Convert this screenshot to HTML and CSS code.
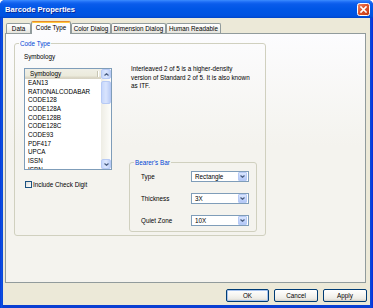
FILE: index.html
```html
<!DOCTYPE html>
<html>
<head>
<meta charset="utf-8">
<link rel="stylesheet" href="styles.css">
</head>
<body>
<div class="window">
  <div class="titlebar">
    <span class="title">Barcode Properties</span>
    <span class="close">
      <svg width="13" height="13" viewBox="0 0 13 13">
        <defs>
          <linearGradient id="cg" x1="0" y1="0" x2="1" y2="1">
            <stop offset="0" stop-color="#F08A6A"/>
            <stop offset="0.45" stop-color="#E0552D"/>
            <stop offset="1" stop-color="#C2380F"/>
          </linearGradient>
        </defs>
        <rect x="0.5" y="0.5" width="12" height="12" rx="2" fill="url(#cg)" stroke="#FFFFFF"/>
        <path d="M4 4 L9 9 M9 4 L4 9" stroke="#FFFFFF" stroke-width="1.6" stroke-linecap="square"/>
      </svg>
    </span>
  </div>
  <div class="client">
    <div class="tabs">
      <div class="tab w25">Data</div>
      <div class="tab sel w40">Code Type</div>
      <div class="tab w40">Color Dialog</div>
      <div class="tab w55">Dimension Dialog</div>
      <div class="tab w55">Human Readable</div>
    </div>
    <div class="panel">
      <fieldset class="group main">
        <legend>Code Type</legend>
        <div class="cols">
          <div class="leftcol">
            <div class="lbl">Symbology</div>
            <div class="listbox">
              <div class="lb-main">
                <div class="lb-head"><span>Symbology</span></div>
                <div class="lb-item">EAN13</div>
                <div class="lb-item">RATIONALCODABAR</div>
                <div class="lb-item">CODE128</div>
                <div class="lb-item">CODE128A</div>
                <div class="lb-item">CODE128B</div>
                <div class="lb-item">CODE128C</div>
                <div class="lb-item">CODE93</div>
                <div class="lb-item">PDF417</div>
                <div class="lb-item">UPCA</div>
                <div class="lb-item">ISSN</div>
                <div class="lb-item">ISBN</div>
              </div>
              <div class="vscroll">
                <div class="sbtn">
                  <svg width="5" height="3" viewBox="0 0 5 3"><path d="M0.5 2.5 L2.5 0.7 L4.5 2.5" fill="none" stroke="#4D6185" stroke-width="1.2"/></svg>
                </div>
                <div class="strack"><div class="thumb"></div></div>
                <div class="sbtn">
                  <svg width="5" height="3" viewBox="0 0 5 3"><path d="M0.5 0.5 L2.5 2.3 L4.5 0.5" fill="none" stroke="#4D6185" stroke-width="1.2"/></svg>
                </div>
              </div>
            </div>
            <div class="check"><span class="cbox"></span>Include Check Digit</div>
          </div>
          <div class="rightcol">
            <p class="desc">Interleaved 2 of 5 is a higher-density<br>version of Standard 2 of 5. It is also known<br>as ITF.</p>
            <fieldset class="group bearer">
              <legend>Bearer's Bar</legend>
              <div class="rows">
                <div class="row">
                  <span class="rlabel">Type</span>
                  <div class="combo"><span class="cval">Rectangle</span><span class="cbtn"><svg width="5" height="3" viewBox="0 0 5 3"><path d="M0.5 0.5 L2.5 2.3 L4.5 0.5" fill="none" stroke="#4D6185" stroke-width="1.2"/></svg></span></div>
                </div>
                <div class="row">
                  <span class="rlabel">Thickness</span>
                  <div class="combo"><span class="cval">3X</span><span class="cbtn"><svg width="5" height="3" viewBox="0 0 5 3"><path d="M0.5 0.5 L2.5 2.3 L4.5 0.5" fill="none" stroke="#4D6185" stroke-width="1.2"/></svg></span></div>
                </div>
                <div class="row">
                  <span class="rlabel">Quiet Zone</span>
                  <div class="combo"><span class="cval">10X</span><span class="cbtn"><svg width="5" height="3" viewBox="0 0 5 3"><path d="M0.5 0.5 L2.5 2.3 L4.5 0.5" fill="none" stroke="#4D6185" stroke-width="1.2"/></svg></span></div>
                </div>
              </div>
            </fieldset>
          </div>
        </div>
      </fieldset>
    </div>
    <div class="buttons">
      <div class="btn def w43">OK</div>
      <div class="btn w44">Cancel</div>
      <div class="btn w44">Apply</div>
    </div>
  </div>
</div>
</body>
</html>
```

FILE: styles.css
```css
* { box-sizing: border-box; }
html, body { margin: 0; padding: 0; }
body {
  font-family: "Liberation Sans", Arial, sans-serif;
  font-size: 6.3px;
  color: #000;
  background: #fff;
}
.window {
  width: 373px;
  height: 308px;
  display: flex;
  flex-direction: column;
  background: linear-gradient(90deg, #0831D9 0, #0A4FE0 1px, #0A4FE0 2px, #0A3FD2 3px, #0A3FD2 370px, #0A4FE0 371px, #0831D9 372px);
  border-radius: 5px 5px 0 0;
  overflow: hidden;
}
.titlebar {
  height: 18px;
  flex: none;
  display: flex;
  align-items: center;
  justify-content: space-between;
  padding: 1px 3px 0 5px;
  background: linear-gradient(#3C8DFF 0, #1C6CF5 2px, #0A5CEB 4px, #0056E6 9px, #0054E3 13px, #0052E0 16px, #0045C8 18px);
}
.title {
  color: #fff;
  font-weight: bold;
  font-size: 7.6px;
  text-shadow: 1px 1px 0 #0A2796;
  letter-spacing: 0;
}
.close { width: 13px; height: 13px; display: block; }
.close svg { display: block; }
.client {
  flex: 1;
  margin: 0 3px 3px 3px;
  background: #ECE9D8;
  display: flex;
  flex-direction: column;
}
.tabs {
  flex: none;
  height: 12px;
  margin-top: 3px;
  padding-left: 3px;
  display: flex;
  align-items: flex-end;
  position: relative;
  z-index: 1;
}
.tab {
  height: 10px;
  border: 1px solid #919B9C;
  border-bottom: none;
  border-radius: 2px 2px 0 0;
  background: linear-gradient(#FFFFFF, #F3F3EF 60%, #E3E2DB);
  text-align: center;
  line-height: 9px;
  white-space: nowrap;
}
.tab.sel {
  height: 13px;
  margin-bottom: -1px;
  background: #FCFCFE;
  border-top: 1px solid #E68B2C;
  box-shadow: inset 0 1px 0 #FFC73C;
  line-height: 11px;
}
.w25 { width: 25px; }
.w40 { width: 40px; }
.w55 { width: 55px; }
.w43 { width: 43px; }
.w44 { width: 44px; }
.panel {
  flex: none;
  height: 250px;
  margin: 0 4px 0 2px;
  border: 1px solid #919B9C;
  background: linear-gradient(#FCFCFE, #F4F3EE 45%, #F4F3EE);
  padding: 0 0 0 8px;
}
.group {
  margin: 0;
  padding: 0;
  border: 1px solid #D0D0BF;
  border-radius: 3px;
  min-width: 0;
}
.group legend {
  margin-left: 4px;
  padding: 0 1px;
  line-height: 9px;
  color: #0046D5;
}
.main {
  width: 252px;
  margin-top: 5px;
}
.cols {
  height: 187px;
  display: flex;
  padding: 0 8px 3px 9px;
}
.leftcol {
  width: 87px;
  flex: none;
  padding-top: 5px;
  display: flex;
  flex-direction: column;
}
.lbl { line-height: 8px; }
.listbox {
  margin-top: 7px;
  width: 88px;
  height: 102px;
  border: 1px solid #7F9DB9;
  background: #fff;
  display: flex;
  overflow: hidden;
}
.lb-main { flex: 1; overflow: hidden; }
.lb-head {
  height: 10px;
  line-height: 9px;
  padding-left: 5px;
  background: linear-gradient(#F0EFE6, #EBEADB 70%, #DDD9C8 80%, #D6D2C2);
  position: relative;
}
.lb-head::after {
  content: "";
  position: absolute;
  right: 3px;
  top: 2px;
  height: 6px;
  width: 1px;
  background: #C7C5B2;
  box-shadow: 1px 0 0 #fff;
}
.lb-item {
  padding-left: 3px;
  height: 8.67px;
  line-height: 8.67px;
  white-space: nowrap;
}
.vscroll {
  width: 10px;
  flex: none;
  display: flex;
  flex-direction: column;
  background: linear-gradient(90deg, #EEEDE5, #FDFDFA);
}
.sbtn {
  height: 10px;
  flex: none;
  border: 1px solid #B7CAF5;
  border-radius: 2px;
  background: linear-gradient(90deg, #C6D7FB, #DCE7FE 50%, #BCCEF7);
  display: flex;
  align-items: center;
  justify-content: center;
}
.sbtn svg { display: block; }
.strack {
  flex: 1;
  padding-top: 2px;
}
.thumb {
  height: 23px;
  border: 1px solid #B7CAF5;
  border-radius: 2px;
  background: linear-gradient(90deg, #C6D7FB, #D9E4FD 50%, #BCCEF7);
}
.check {
  margin-top: 11px;
  margin-left: 1px;
  height: 7px;
  line-height: 7px;
  display: flex;
  align-items: center;
  white-space: nowrap;
}
.cbox {
  width: 7px;
  height: 7px;
  border: 1px solid #1C5180;
  background: linear-gradient(135deg, #DCDCD7, #FFFFFF);
  margin-right: 1px;
  flex: none;
}
.rightcol {
  width: 128px;
  flex: none;
  margin-left: 18px;
  display: flex;
  flex-direction: column;
}
.desc {
  margin: 0;
  padding: 17px 0 0 2px;
  line-height: 8.5px;
  white-space: nowrap;
}
.bearer {
  margin-top: auto;
  width: 128px;
}
.rows {
  padding: 4px 7px 5px 11px;
  display: flex;
  flex-direction: column;
  gap: 11px;
}
.row {
  height: 11px;
  display: flex;
  align-items: center;
}
.rlabel { width: 50px; flex: none; }
.combo {
  width: 58px;
  height: 11px;
  border: 1px solid #7F9DB9;
  background: #fff;
  display: flex;
  align-items: center;
  padding: 0 1px 0 3px;
}
.cval { flex: 1; line-height: 9px; }
.cbtn {
  width: 9px;
  height: 9px;
  border: 1px solid #B7CAF5;
  border-radius: 1px;
  background: linear-gradient(#DAE6FE, #C1D3FB 60%, #B4C8F6);
  display: flex;
  align-items: center;
  justify-content: center;
}
.cbtn svg { display: block; }
.buttons {
  flex: none;
  height: 13px;
  margin-top: 6px;
  padding-right: 3px;
  display: flex;
  justify-content: flex-end;
  gap: 5px;
}
.btn {
  height: 13px;
  border: 1px solid #003C74;
  border-radius: 2px;
  background: linear-gradient(#FFFFFF, #F5F4F0 50%, #ECEBE5 80%, #D6D0C5);
  text-align: center;
  line-height: 11px;
}
.btn.def {
  box-shadow: inset 0 0 0 1px #A8C4EE;
}
```
